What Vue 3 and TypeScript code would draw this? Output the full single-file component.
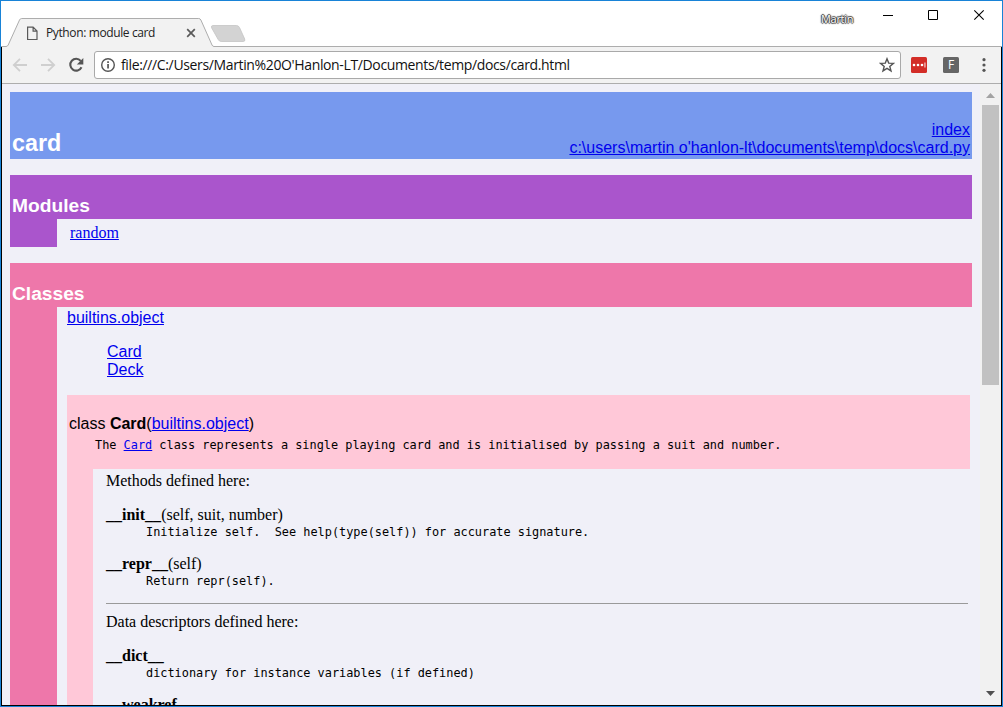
<script setup lang="ts">
interface Entry {
  name: string
  args?: string
  doc?: string
}
interface Section {
  title: string
  entries: Entry[]
}

const sections: Section[] = [
  {
    title: 'Methods defined here:',
    entries: [
      { name: '__init__', args: '(self, suit, number)', doc: 'Initialize self.  See help(type(self)) for accurate signature.' },
      { name: '__repr__', args: '(self)', doc: 'Return repr(self).' },
    ],
  },
  {
    title: 'Data descriptors defined here:',
    entries: [
      { name: '__dict__', doc: 'dictionary for instance variables (if defined)' },
      { name: '__weakref__' },
    ],
  },
]
</script>

<template>
  <div class="window">
    <header class="titlebar">
      <svg class="tab-shape" width="1001" height="46" viewBox="1 1 1001 46">
        <path d="M213 25.500h23.500q2 0 3 2l5.200 11.500q.8 2.500-1.500 2.500h-22q-2 0-3-2l-6.500-11.500q-1-2.500 1.300-2.500z" fill="#d3d3d3" stroke="#c4c4c4" stroke-width=".8" />
        <path d="M1 46.500H6q1.500 0 2.200-1.500L19.500 20q.7-1.500 2.200-1.500h177q1.500 0 2.200 1.500L212 45q.7 1.500 2 1.500H1002V48H1z" fill="#f2f2f2" />
        <path d="M1 46.500H6q1.500 0 2.200-1.500L19.500 20q.7-1.500 2.200-1.500h177q1.500 0 2.200 1.500L212 45q.7 1.500 2 1.500H1002" fill="none" stroke="#adadad" />
      </svg>
      <div class="tab">
        <svg class="page-icon" width="12" height="15" viewBox="0 0 12 15" fill="none" stroke="#5a5a5a" stroke-width="1.200">
          <path d="M1.600 1.100h5.500l3.900 4v8.400H1.600zM7.100 1.100v4H11" />
        </svg>
        <span class="tab-title">Python: module card</span>
        <svg width="10" height="10" viewBox="0 0 10 10" stroke="#5a5a5a" stroke-width="1.700"><path d="M1.200 1.200l7.600 7.600M8.800 1.200L1.200 8.800" /></svg>
      </div>
      <span class="user">Martin</span>
      <svg class="controls" width="103" height="12" viewBox="0 0 103 12" fill="none" stroke="#000">
        <path d="M0 6.500h10M45.500 1.500h9v9h-9z" />
        <path d="M91.300 1.300l9.400 9.400M100.700 1.300l-9.400 9.400" stroke-width="1.100" />
      </svg>
    </header>

    <nav class="toolbar">
      <svg class="nav-icon" width="16" height="16" viewBox="0 0 16 16" fill="none" stroke="#cfcfcf" stroke-width="1.800"><path d="M15 8H2M8 1.800L1.800 8 8 14.200" /></svg>
      <svg class="nav-icon" width="16" height="16" viewBox="0 0 16 16" fill="none" stroke="#cfcfcf" stroke-width="1.800"><path d="M1 8h13M8 1.800L14.200 8 8 14.200" /></svg>
      <svg class="nav-icon" width="16" height="16" viewBox="0 0 16 16"><path d="M13.500 10.300A5.900 5.900 0 1 1 12.700 3.900" fill="none" stroke="#555" stroke-width="2.100" /><path d="M15.300 1v6.500H8.800z" fill="#555" /></svg>
      <div class="omnibox">
        <svg width="16" height="16" viewBox="0 0 16 16"><circle cx="8" cy="8" r="6.300" fill="none" stroke="#555" stroke-width="1.400" /><path d="M7.200 7h1.700v4.600H7.200zM7.200 4.300h1.700v1.600H7.200z" fill="#555" /></svg>
        <span class="url">file:///C:/Users/Martin%20O'Hanlon-LT/Documents/temp/docs/card.html</span>
        <svg width="16" height="16" viewBox="0 0 16 16" fill="none" stroke="#555" stroke-width="1.400"><path d="M8 1.800l1.700 4.300 4.700.3-3.600 3 1.200 4.500L8 11.400l-4 2.500 1.200-4.500-3.600-3 4.700-.3z" /></svg>
      </div>
      <svg class="ext-red" width="16" height="16" viewBox="0 0 16 16"><rect width="16" height="16" rx="1.500" fill="#d32d27" /><g fill="#fff"><circle cx="3" cy="8" r="1.300" /><circle cx="7" cy="8" r="1.300" /><circle cx="11" cy="8" r="1.300" /><path d="M13.500 5.500h.9v5h-.9z" /></g></svg>
      <span class="ext-f">F</span>
      <svg class="menu" width="4" height="16" viewBox="0 0 4 16" fill="#555"><circle cx="2" cy="2.700" r="1.600" /><circle cx="2" cy="8" r="1.600" /><circle cx="2" cy="13.300" r="1.600" /></svg>
    </nav>

    <div class="viewport">
      <main class="page">
        <section class="heading">
          <h1>card</h1>
          <div class="paths"><a>index</a><br /><a>c:\users\martin o'hanlon-lt\documents\temp\docs\card.py</a></div>
        </section>

        <section class="block modules">
          <h2>Modules</h2>
          <div class="row">
            <div class="gutter"></div>
            <div class="module-list"><a>random</a></div>
          </div>
        </section>

        <section class="block classes">
          <h2>Classes</h2>
          <div class="row">
            <div class="gutter"></div>
            <div class="class-body">
              <a>builtins.object</a>
              <div class="tree"><a>Card</a><br /><a>Deck</a></div>
              <article class="class-card">
                <div class="class-head">
                  <div class="class-name">class <b>Card</b>(<a>builtins.object</a>)</div>
                  <pre class="class-doc">The <a>Card</a> class represents a single playing card and is initialised by passing a suit and number.</pre>
                </div>
                <div class="row">
                  <div class="class-gutter"></div>
                  <div class="members">
                    <div v-for="(s, i) in sections" :key="s.title">
                      <hr v-if="i > 0" />
                      <div class="member-title">{{ s.title }}</div>
                      <dl v-for="e in s.entries" :key="e.name">
                        <dt><b>{{ e.name }}</b>{{ e.args }}</dt>
                        <dd v-if="e.doc">{{ e.doc }}</dd>
                      </dl>
                    </div>
                  </div>
                </div>
              </article>
            </div>
          </div>
        </section>
      </main>
      <div class="scrollbar">
        <svg width="17" height="21" viewBox="0 0 17 21"><path d="M4 14h9L8.500 9z" fill="#a3a3a3" /></svg>
        <div class="thumb"></div>
        <svg class="down" width="17" height="21" viewBox="0 0 17 21"><path d="M4 7h9l-4.500 5z" fill="#505050" /></svg>
      </div>
    </div>
  </div>
</template>

<style>
body {
  margin: 0;
  overflow: hidden;
}
</style>

<style scoped>
* {
  box-sizing: border-box;
}
.window {
  width: 1003px;
  height: 707px;
  display: flex;
  flex-direction: column;
  border: 1px solid #1883d7;
  background: #fff;
  overflow: hidden;
}
.titlebar {
  position: relative;
  height: 46px;
  flex: none;
  display: flex;
}
.tab-shape {
  position: absolute;
  left: 0;
  top: 0;
}
.tab {
  position: relative;
  width: 213px;
  height: 28px;
  margin-top: 18px;
  padding-left: 25px;
  display: flex;
  align-items: center;
}
.tab-title {
  width: 140px;
  margin: 0 0 0 8px;
  font: 12px/18px "Open Sans", "Noto Sans", sans-serif;
  letter-spacing: -0.38px;
  color: #222;
  white-space: nowrap;
}
.user {
  margin: 10px 0 0 607px;
  width: 62px;
  font: 11px/15px "Open Sans", "Noto Sans", sans-serif;
  letter-spacing: -0.3px;
  color: #fff;
  text-shadow: 1px 0 1px #333, -1px 0 1px #333, 0 1px 1px #333, 0 -1px 1px #333;
}
.controls {
  margin-top: 8px;
}
.toolbar {
  height: 37px;
  flex: none;
  display: flex;
  align-items: center;
  padding: 0 0 1px 10px;
  background: #f2f2f2;
  border: solid #000;
  border-width: 0 1px;
  box-shadow: inset 0 -1px #adadad;
}
.nav-icon {
  margin-right: 12px;
}
.omnibox {
  width: 807px;
  height: 28px;
  margin-left: -2px;
  padding: 0 5px;
  display: flex;
  align-items: center;
  background: #fff;
  border: 1px solid #a9a9a9;
  border-radius: 3px;
}
.url {
  flex: 1;
  margin-left: 5px;
  font: 14px/20px "Open Sans", "Noto Sans", sans-serif;
  letter-spacing: -0.36px;
  color: #111;
  white-space: nowrap;
}
.ext-red {
  margin-left: 10px;
}
.ext-f {
  width: 16px;
  height: 16px;
  margin: 0 23px 0 16px;
  border-radius: 1.5px;
  background: #666;
  color: #fff;
  font: 12px/16px "Open Sans", sans-serif;
  text-align: center;
}
.viewport {
  flex: 1;
  min-height: 0;
  display: flex;
  border: solid #000;
  border-width: 0 1px 1px;
  background: #f0f0f8;
  overflow: hidden;
}
.page {
  width: 978px;
  padding: 8px 8px 0;
  font: 16px/18px "Liberation Serif", "Times New Roman", serif;
  color: #000;
  overflow: hidden;
}
a {
  color: #0000ee;
  text-decoration: underline;
}
.heading {
  height: 67px;
  padding: 0 2px 2px;
  display: flex;
  align-items: flex-end;
  justify-content: space-between;
  background: #7799ee;
  font-family: "Liberation Sans", Arial, sans-serif;
}
h1 {
  margin: 0;
  font-size: 23.3px;
  line-height: 28px;
  color: #fff;
}
.paths {
  text-align: right;
}
.block {
  margin-top: 16px;
}
h2 {
  height: 44px;
  margin: 0;
  padding: 20px 2px 0;
  font: bold 19.2px/21px "Liberation Sans", Arial, sans-serif;
  color: #fff;
}
.row {
  display: flex;
}
.modules h2,
.modules .gutter {
  background: #aa55cc;
}
.classes h2,
.classes .gutter {
  background: #ee77aa;
}
.gutter {
  width: 47px;
  flex: none;
}
.module-list {
  height: 28px;
  padding: 5px 0 0 13px;
}
.class-body {
  flex: 1;
  height: 600px;
  padding: 2px 2px 0 10px;
  font-family: "Liberation Sans", Arial, sans-serif;
}
.tree {
  margin: 16px 0 16px 40px;
}
.class-head {
  height: 74px;
  padding: 20px 2px 0;
  background: #ffc8d8;
}
.class-doc {
  margin: 5px 0 0 26px;
  font: 11.88px/15px "DejaVu Sans Mono", monospace;
}
.class-gutter {
  width: 26px;
  height: 400px;
  flex: none;
  background: #ffc8d8;
}
.members {
  flex: 1;
  padding: 3px 2px 0 13px;
  font-family: "Liberation Serif", "Times New Roman", serif;
}
dl {
  margin: 16px 0 0;
}
dl + dl {
  margin-top: 15px;
}
dt {
  line-height: 18px;
}
dd {
  margin: 0 0 0 40px;
  padding-top: 1px;
  font: 11.88px/15px "DejaVu Sans Mono", monospace;
  white-space: pre;
}
hr {
  height: 1px;
  margin: 14px 0 9px;
  border: 0;
  background: #9a9a9a;
}
.scrollbar {
  width: 21px;
  padding-left: 2px;
  display: flex;
  flex-direction: column;
  background: #f1f1f1;
}
.thumb {
  width: 17px;
  height: 280px;
  flex: none;
  background: #c1c1c1;
}
.down {
  margin-top: auto;
}
.scrollbar svg {
  flex: none;
}
</style>
